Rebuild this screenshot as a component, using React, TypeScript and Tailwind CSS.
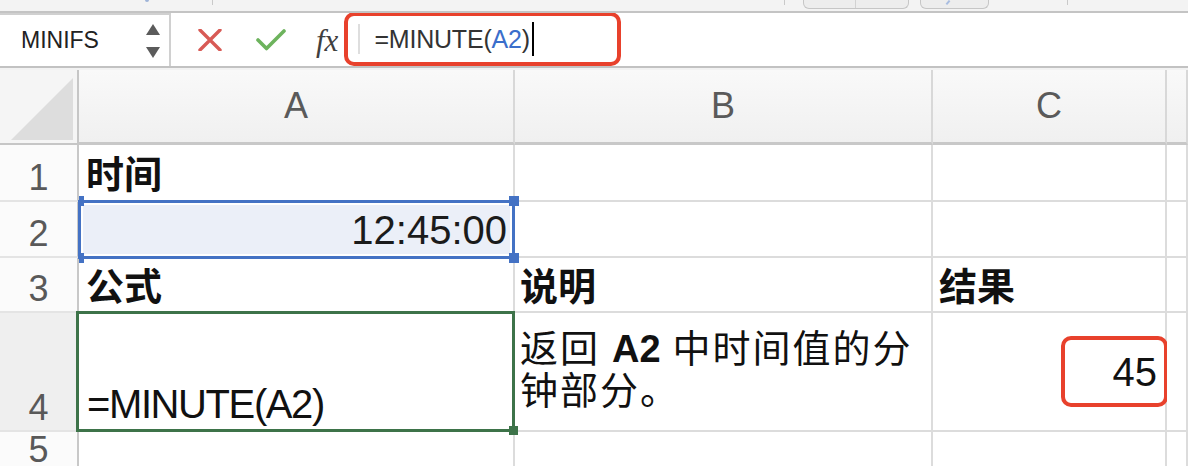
import React from 'react';

const sans = "font-['Liberation_Sans','Noto_Sans_CJK_SC',sans-serif]";

function TopStrip() {
  return (
    <div className="relative flex h-[13px] items-start border-b-2 border-[#c4c4c4] bg-[#f3f3f3]">
      <div className="ml-[145px] mt-0 h-[2px] w-[4px] rounded-b bg-[#9fb4d8]" />
      <div className="ml-[63px] h-[5px] w-px bg-[#c9c9c9]" />
      <div className="ml-[571px] h-[5px] w-px bg-[#c9c9c9]" />
      <div className="ml-[18px] flex h-[9px] w-[106px] rounded-b-[6px] border border-t-0 border-[#c6c6c6] bg-[#ededed]">
        <div className="w-[52px] border-r border-[#d2d2d2]" />
      </div>
      <div className="relative ml-[11px] h-[9px] w-[69px] rounded-b-[6px] border border-t-0 border-[#c6c6c6] bg-[#ededed]">
        <div className="absolute left-[26px] top-0 h-[5px] w-[2px] rotate-[40deg] bg-[#a9bde0]" />
      </div>
      <div className="ml-[78px] h-[5px] w-px bg-[#c9c9c9]" />
    </div>
  );
}

function FormulaBar() {
  return (
    <div className="flex h-[55px] items-stretch border-b-2 border-[#c2c2c2] bg-white">
      {/* name box */}
      <div className="flex w-[171px] items-center border-r-2 border-t-2 border-[#d0d0d0] pl-[21px] pr-[9px]">
        <span className={`${sans} text-[23px] leading-none text-[#222]`}>MINIFS</span>
        <div className="ml-auto flex flex-col gap-[12px]">
          <svg width="14" height="11" viewBox="0 0 14 11">
            <path d="M7 0 L14 11 L0 11 Z" fill="#5b5b5b" />
          </svg>
          <svg width="14" height="11" viewBox="0 0 14 11">
            <path d="M0 0 L14 0 L7 11 Z" fill="#5b5b5b" />
          </svg>
        </div>
      </div>
      {/* cancel / enter / fx */}
      <div className="flex items-center pl-[27px]">
        <svg width="24" height="22" viewBox="0 0 24 22">
          <path d="M2 1 L22 21 M22 1 L2 21" stroke="#d85a55" strokeWidth="3.4" strokeLinecap="round" />
        </svg>
        <svg className="ml-[34px]" width="30" height="22" viewBox="0 0 30 22">
          <path d="M2 11 L10.5 19.5 L28 2" stroke="#6db35d" strokeWidth="3.6" fill="none" strokeLinecap="round" strokeLinejoin="round" />
        </svg>
        <span className="ml-[30px] mt-[2px] font-['Liberation_Serif',serif] text-[31px] italic leading-none text-[#3f3f3f]">
          fx
        </span>
      </div>
      {/* highlighted formula input */}
      <div className="ml-[6px] mt-[-1px] flex h-[54px] w-[277px] items-center rounded-[10px] border-4 border-[#e8412c] pl-[10px]">
        <div className="h-[30px] w-[2px] bg-[#dedede]" />
        <span className={`${sans} ml-[14px] text-[25px] leading-none tracking-[-0.2px] text-[#333]`}>
          =MINUTE(<span className="text-[#3a6ecb]">A2</span>)
        </span>
        <div className="ml-[2px] h-[34px] w-[2px] bg-black" />
      </div>
    </div>
  );
}

const cell = 'border-r-2 border-b-2 border-[#dcdcdc] bg-white';
const rowHead =
  'flex items-end justify-center border-r-2 border-b-2 border-r-[#c8c8c8] border-b-[#e4e4e4] pb-[4px] text-[36px] leading-none text-[#595959]';
const colHead =
  'flex items-center justify-center border-r-2 border-b-[3px] border-r-[#d8d8d8] border-b-[#c8c8c8] bg-gradient-to-b from-[#f9f9f9] to-[#f0f0f0] text-[36px] leading-none text-[#5a5a5a]';

function Sheet() {
  return (
    <div
      className={`${sans} grid grid-cols-[79px_436px_418px_234px_1fr] grid-rows-[75px_57px_56px_55px_119px_1fr] border-t-2 border-[#f2f2f2]`}
    >
      {/* header row */}
      <div className="flex items-end justify-end border-r-2 border-b-2 border-[#c6c6c6] bg-[#f5f5f5] pb-[3px] pr-[4px]">
        <svg width="62" height="62" viewBox="0 0 62 62">
          <path d="M62 0 L62 62 L0 62 Z" fill="#dddddd" />
        </svg>
      </div>
      <div className={`${colHead} border-b-[#3c7448] text-[#3b7548]`}>A</div>
      <div className={colHead}>B</div>
      <div className={colHead}>C</div>
      <div className={colHead} />

      {/* row 1 */}
      <div className={`${rowHead} bg-[#fbfbfb]`}>1</div>
      <div className={`${cell} flex items-end px-[7px] pb-[6px] text-[38px] font-bold leading-none text-[#111]`}>
        时间
      </div>
      <div className={cell} />
      <div className={cell} />
      <div className={cell} />

      {/* row 2 */}
      <div className={`${rowHead} bg-[#fbfbfb]`}>2</div>
      <div className="relative z-10 -mt-[2px] -ml-[1px] mb-[-1px] border-[3px] border-[#4472c4] bg-white p-[2px]">
        <div className="flex h-full items-end justify-end bg-[#ebeff8] pb-[4px] pr-[3px] text-[40px] leading-none text-[#1b1b1b]">
          12:45:00
        </div>
        <div className="absolute -right-[7px] -top-[7px] h-[10px] w-[10px] bg-[#4472c4]" />
        <div className="absolute -bottom-[7px] -right-[7px] h-[10px] w-[10px] bg-[#4472c4]" />
        <div className="absolute -left-[2px] -top-[7px] h-[10px] w-[5px] bg-[#4472c4]" />
        <div className="absolute -bottom-[7px] -left-[2px] h-[10px] w-[5px] bg-[#4472c4]" />
      </div>
      <div className={cell} />
      <div className={cell} />
      <div className={cell} />

      {/* row 3 */}
      <div className={`${rowHead} bg-[#fbfbfb]`}>3</div>
      <div className={`${cell} flex items-end px-[7px] pb-[5px] text-[38px] font-bold leading-none text-[#111]`}>
        公式
      </div>
      <div className={`${cell} flex items-end px-[5px] pb-[5px] text-[38px] font-bold leading-none text-[#111]`}>
        说明
      </div>
      <div className={`${cell} flex items-end px-[6px] pb-[5px] text-[38px] font-bold leading-none text-[#111]`}>
        结果
      </div>
      <div className={cell} />

      {/* row 4 */}
      <div className={`${rowHead} bg-[#efefef] text-[#3b7548]`}>4</div>
      <div className={`${cell} relative flex items-end px-[8px] pb-[6px] text-[40px] leading-none tracking-[-1.4px] text-[#111]`}>
        =MINUTE(A2)
        <div className="pointer-events-none absolute -left-[3px] -top-[2px] bottom-[-2px] right-[-2px] border-[3px] border-[#3d7349]" />
        <div className="absolute -bottom-[5px] -right-[5px] h-[9px] w-[9px] bg-[#3d7349]" />
      </div>
      <div className={`${cell} flex items-end px-[5px] pb-[18px] text-[38px] leading-[42px] tracking-[2px] text-[#111]`}>
        <p>
          返回<span className="mx-[12px] font-semibold tracking-normal">A2</span>中时间值的分
          <br />
          钟部分。
        </p>
      </div>
      <div className={`${cell} flex items-center justify-end`}>
        <span className="-mr-[3px] flex h-[71px] w-[107px] items-center justify-end rounded-[10px] border-4 border-[#e8412c] pr-[7px] text-[40px] leading-none text-[#111]">
          45
        </span>
      </div>
      <div className={cell} />

      {/* row 5 */}
      <div className={`${rowHead} bg-[#fbfbfb]`}>5</div>
      <div className={cell} />
      <div className={cell} />
      <div className={cell} />
      <div className={cell} />
    </div>
  );
}

export default function App() {
  return (
    <div className="h-[466px] w-[1188px] overflow-hidden bg-white">
      <TopStrip />
      <FormulaBar />
      <Sheet />
    </div>
  );
}
